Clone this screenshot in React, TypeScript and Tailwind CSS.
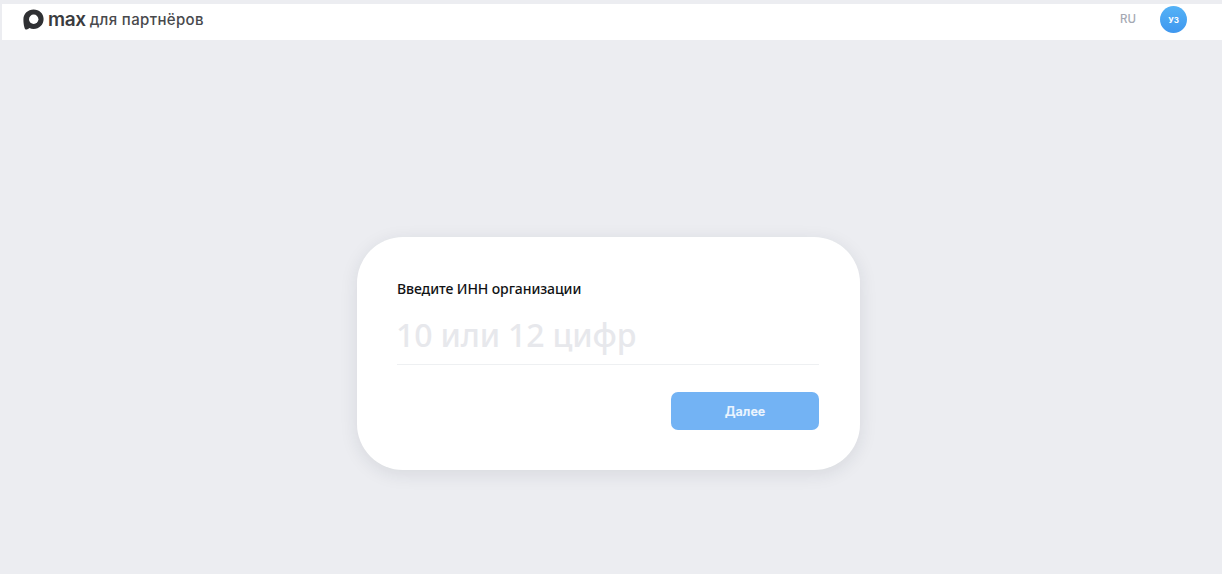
export default function App() {
  return (
    <div className="h-[574px] w-[1222px] overflow-hidden bg-[#ecedf1] pl-[2px] pt-[4px] font-['Noto_Sans','Open_Sans',sans-serif]">
      {/* Header */}
      <header className="flex h-[36px] items-center justify-between bg-white pb-[5px] pl-[21px] pr-[35px]">
        <div className="flex items-center">
          <svg width="21" height="21" viewBox="0 0 21 21" className="mr-[4px]">
            <path
              d="M10.6 0.4C4.9 0.4 0.4 4.7 0.4 10.3c0 3 .3 5.4 .9 7.6 .5 1.9 1.1 2.8 2.3 2.6 1-.2 2-1 2.8-1.6 1.3 .7 2.7 1 4.2 1 5.6 0 10-4.4 10-10S16.200 .4 10.600 .4z"
              fill="#2f3033"
            />
            <circle cx="10.700" cy="10.300" r="4.700" fill="#ffffff" />
          </svg>
          <span className="mr-[4px] font-['Inter',sans-serif] text-[19px] leading-none font-semibold tracking-[-0.4px] text-[#3a3b3e]">
            max
          </span>
          <span className="font-['Inter',sans-serif] text-[15px] leading-none font-medium tracking-[0.35px] text-[#48494c]">
            для партнёров
          </span>
        </div>
        <div className="flex items-center gap-[24px]">
          <span className="font-['Inter',sans-serif] text-[11.5px] font-medium text-[#a5a9b3]">RU</span>
          <div className="flex h-[27px] w-[27px] items-center justify-center rounded-full bg-gradient-to-b from-[#54b2f6] to-[#3f97ef] font-['Inter',sans-serif] text-[8px] font-bold text-white">
            УЗ
          </div>
        </div>
      </header>

      {/* Card */}
      <main className="flex justify-center pt-[197px] pr-[7px]">
        <div className="h-[233px] w-[503px] rounded-[46px] bg-white pl-[40px] pr-[41px] pt-[42px] shadow-[0_4px_18px_rgba(30,35,60,0.10)]">
          <div className="text-[14px] leading-[20px] font-medium tracking-[-0.09px] text-[#111214]">Введите ИНН организации</div>
          <div className="mt-[14px] flex h-[52px] items-center border-b border-[#eef0f2] pb-[8px]">
            <input
              placeholder="10 или 12 цифр"
              className="-ml-[1px] w-full bg-transparent text-[32px] leading-[44px] font-medium tracking-[-0.15px] outline-none placeholder:text-[#e7e8ec]"
            />
          </div>
          <div className="mt-[27px] flex justify-end">
            <button className="h-[38px] w-[148px] rounded-[7px] bg-[#73b3f4] pt-[2px] font-['Inter',sans-serif] text-[12.5px] font-bold text-[#eaf4fe]">
              Далее
            </button>
          </div>
        </div>
      </main>
    </div>
  );
}
